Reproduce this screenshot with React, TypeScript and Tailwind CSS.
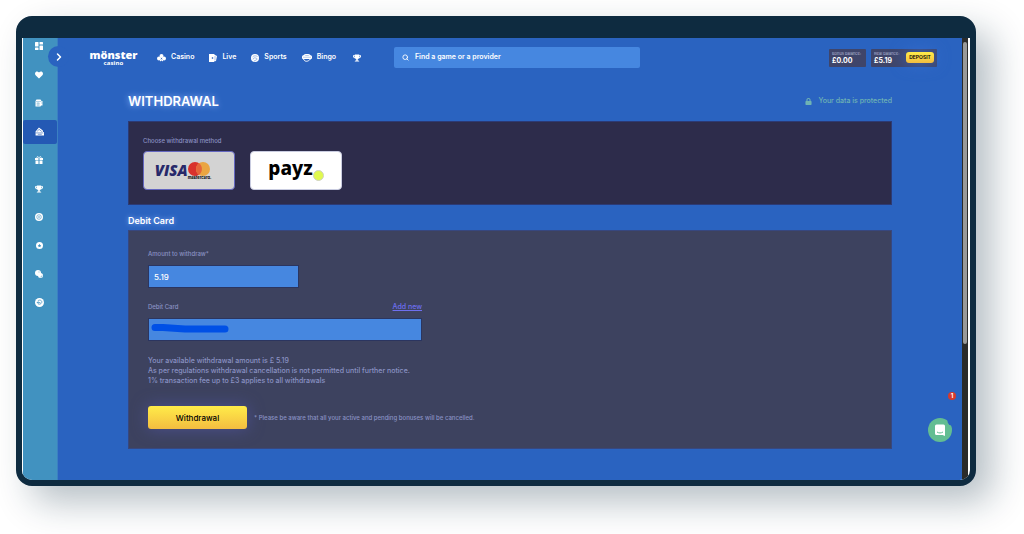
import type { ReactNode } from 'react';
import { FaHeart, FaTrophy, FaLock } from 'react-icons/fa';
import { ChevronRight, Search } from 'lucide-react';

function DashboardIcon() {
  return (
    <svg viewBox="0 0 16 16" className="size-2" fill="currentColor">
      <rect x="0" y="0" width="7" height="9" rx="1" />
      <rect x="9" y="0" width="7" height="5" rx="1" />
      <rect x="0" y="11" width="7" height="5" rx="1" />
      <rect x="9" y="7" width="7" height="9" rx="1" />
    </svg>
  );
}

function WalletIcon() {
  return (
    <svg viewBox="0 0 16 16" className="size-2">
      <path d="M3 1h8l2 3h2v9h-3l-1 2H1V4z" fill="currentColor" />
      <path d="M2 5h11M3 8.500h7M3 12h7M6 6v8M12 8h3" stroke="#4192c0" strokeWidth="0.8" />
    </svg>
  );
}

function WithdrawIcon() {
  return (
    <svg viewBox="0 0 16 16" className="size-[9px]">
      <path d="M1 8l6-7 7 5v3h2v6H1z" fill="currentColor" />
      <path d="M4 8l3-4 5 4M1 10.500h14M5 13h7" stroke="#2459b4" strokeWidth="1" fill="none" />
    </svg>
  );
}

function GiftIcon() {
  return (
    <svg viewBox="0 0 16 16" className="size-2" fill="currentColor">
      <path d="M0 4h7v4H0zM9 4h7v4H9zM1 9h6v7H1zM9 9h6v7H9z" />
      <path d="M8 4C6-1 3 1 4 4M8 4c2-5 5-3 4 0" stroke="currentColor" strokeWidth="1.500" fill="none" />
    </svg>
  );
}

function ChipIcon() {
  return (
    <svg viewBox="0 0 16 16" className="size-2">
      <circle cx="8" cy="8" r="8" fill="currentColor" />
      <circle cx="8" cy="8" r="4.500" fill="none" stroke="#4192c0" strokeWidth="1.2" />
      <circle cx="8" cy="8" r="1.500" fill="#4192c0" />
    </svg>
  );
}

function StarChipIcon() {
  return (
    <svg viewBox="0 0 16 16" className="size-[7px]">
      <circle cx="8" cy="8" r="8" fill="currentColor" />
      <path d="M8 4l1.300 2.700 2.700.4-2 2 .5 2.900L8 10.700 5.500 12l.5-2.900-2-2 2.700-.4z" fill="#4192c0" />
    </svg>
  );
}

function CoinsIcon() {
  return (
    <svg viewBox="0 0 16 16" className="size-2">
      <circle cx="11" cy="11" r="5" fill="currentColor" />
      <circle cx="6" cy="6" r="6" fill="currentColor" />
      <path d="M8 3v2M11 14c2 0 3-1 3-3" stroke="#4192c0" strokeWidth="1.2" fill="none" />
    </svg>
  );
}

function HistoryIcon() {
  return (
    <svg viewBox="0 0 16 16" className="size-[9px]">
      <circle cx="8" cy="8" r="8" fill="currentColor" />
      <path d="M5 5c4-3 8 0 7 3s-5 4-7 2M3.500 8h6M6 6L4 8l2 2" stroke="#4192c0" strokeWidth="1.3" fill="none" />
    </svg>
  );
}

function ClubIcon() {
  return (
    <svg viewBox="0 0 18 16" className="h-2 w-[9px]" fill="currentColor">
      <circle cx="9" cy="4" r="4" />
      <circle cx="4" cy="9" r="4" />
      <circle cx="14" cy="9" r="4" />
      <path d="M6 15v-3l3-2 3 2v3l-3-2z" />
    </svg>
  );
}

function CardsIcon() {
  return (
    <svg viewBox="0 0 16 16" className="size-2">
      <path d="M0 0h10l2 2 4 2-2 10-4 1v1H0z" fill="currentColor" />
      <path d="M7 6l2 2-2 2-2-2z" fill="#2a63c0" />
      <path d="M12 4v9" stroke="#2a63c0" strokeWidth="0.8" />
    </svg>
  );
}

function BallIcon() {
  return (
    <svg viewBox="0 0 16 16" className="size-2">
      <circle cx="8" cy="8" r="8" fill="currentColor" />
      <path d="M3 6c3-4 8-2 10-1M4 11c0-4 4-4 8-2M6 14c2-1 5-2 7-4" stroke="#2a63c0" strokeWidth="0.9" fill="none" />
    </svg>
  );
}

function BingoIcon() {
  return (
    <svg viewBox="0 0 20 16" className="h-2 w-[10px]">
      <path d="M3 4c3-4 11-4 14 0" stroke="currentColor" strokeWidth="2.500" fill="none" />
      <rect x="0" y="3" width="20" height="7" rx="2" fill="currentColor" />
      <path d="M4 5.500v2M8 5.500v2M12 5.500v2M16 5.500v2" stroke="#2a63c0" strokeWidth="1.3" />
      <path d="M3 10c2 6 9 6 14 0" stroke="currentColor" strokeWidth="2" fill="none" />
    </svg>
  );
}

const sideItems: { label: string; icon: ReactNode; active?: boolean }[] = [
  { label: 'Dashboard', icon: <DashboardIcon /> },
  { label: 'Favourites', icon: <FaHeart className="size-2" /> },
  { label: 'Deposit', icon: <WalletIcon /> },
  { label: 'Withdrawal', icon: <WithdrawIcon />, active: true },
  { label: 'Bonuses', icon: <GiftIcon /> },
  { label: 'Tournaments', icon: <FaTrophy className="size-2" /> },
  { label: 'Games', icon: <ChipIcon /> },
  { label: 'Rewards', icon: <StarChipIcon /> },
  { label: 'Transactions', icon: <CoinsIcon /> },
  { label: 'History', icon: <HistoryIcon /> },
];

const navItems = [
  { label: 'Casino', icon: <ClubIcon /> },
  { label: 'Live', icon: <CardsIcon /> },
  { label: 'Sports', icon: <BallIcon /> },
  { label: 'Bingo', icon: <BingoIcon /> },
];

function Sidebar() {
  return (
    <aside className="relative z-10 w-9 shrink-0 border-r border-l border-r-[#3b80c2] border-l-white bg-[#4192c0]">
      <nav className="-mt-1 flex h-[281px] flex-col justify-between">
        {sideItems.map((item) => (
          <a
            key={item.label}
            href="#"
            aria-label={item.label}
            className={`flex h-6 items-center justify-center rounded-xs pr-0.5 text-white ${item.active ? 'bg-[#2459b4]' : ''}`}
          >
            {item.icon}
          </a>
        ))}
      </nav>
      <button
        type="button"
        aria-label="Expand menu"
        className="absolute top-2 -right-3 flex size-[21px] items-center justify-center rounded-full bg-[#2a63c0] text-white"
      >
        <ChevronRight className="size-3" strokeWidth={3} />
      </button>
    </aside>
  );
}

function Logo() {
  return (
    <a href="#" aria-label="Monster Casino" className="flex w-[47px] flex-col items-center font-['Noto_Sans',sans-serif] text-white">
      <span className="text-[11px] leading-[10px] font-black">mönster</span>
      <span className="text-[6px] leading-[6px] font-bold tracking-wide">casino</span>
    </a>
  );
}

function Header() {
  return (
    <header className="flex h-[39px] items-center pr-[25px] pl-8">
      <Logo />
      <nav className="ml-5 flex w-[205px] items-center gap-[15px] text-white">
        {navItems.map((item) => (
          <a key={item.label} href="#" className="flex items-center gap-[5px] text-[7px] font-semibold">
            {item.icon}
            {item.label}
          </a>
        ))}
        <a href="#" aria-label="Tournaments" className="ml-0.5">
          <FaTrophy className="size-2" />
        </a>
      </nav>
      <label className="ml-8 flex h-[21px] w-[246px] items-center gap-1.5 rounded-xs bg-[#4687e0] px-2 text-white">
        <Search className="size-[7px]" strokeWidth={3} />
        <input
          type="search"
          aria-label="Find a game or a provider"
          placeholder="Find a game or a provider"
          className="min-w-0 flex-1 bg-transparent text-[7px] font-semibold outline-none placeholder:text-white"
        />
      </label>
      <div className="ml-auto flex gap-[5px] text-white">
        <div className="flex h-[18px] w-[37px] flex-col justify-center rounded-[1px] bg-[#3f456a] pl-[3px]">
          <span className="text-[4px] leading-[5px] whitespace-nowrap text-[#b3b8d6]">Bonus balance:</span>
          <span className="text-[7px] leading-[9px] font-bold">£0.00</span>
        </div>
        <div className="flex h-[18px] w-[66px] items-center justify-between rounded-[1px] bg-[#3f456a] pr-[3px] pl-[3px]">
          <div className="flex flex-col">
            <span className="text-[4px] leading-[5px] whitespace-nowrap text-[#b3b8d6]">Real balance:</span>
            <span className="text-[7px] leading-[9px] font-bold">£5.19</span>
          </div>
          <button
            type="button"
            className="h-[11px] w-7 rounded-[3px] bg-linear-to-b from-[#ffec49] to-[#f3bd40] text-[5px] leading-[11px] font-semibold text-black shadow-[0_0_16px_#3a6fd0]"
          >
            DEPOSIT
          </button>
        </div>
      </div>
    </header>
  );
}

function VisaMastercard() {
  return (
    <span className="flex items-center pr-3">
      <span className="font-['Open_Sans',sans-serif] text-[15px] leading-none font-extrabold text-[#27296a] italic">VISA</span>
      <span className="flex flex-col items-center pt-px">
        <svg viewBox="0 0 22 14" className="h-[14px] w-[22px]">
          <circle cx="7" cy="7" r="7" fill="#d9322b" />
          <circle cx="15" cy="7" r="7" fill="#eaa541" />
          <path d="M11 1.300a7 7 0 0 1 0 11.400a7 7 0 0 1 0-11.400" fill="#e5653a" />
        </svg>
        <span className="text-[4px] leading-[4px] font-bold text-black">mastercard.</span>
      </span>
    </span>
  );
}

function Payz() {
  return (
    <span className="flex items-end pb-1.5">
      <span className="font-['Noto_Sans',sans-serif] text-[19px] leading-[22px] font-extrabold text-black">payz</span>
      <span className="-mb-0.5 size-[11px] rounded-full border border-[#cfd2c0] bg-[#e0f94f]" />
    </span>
  );
}

function MethodPanel() {
  return (
    <section className="mt-[11px] border border-[#2c3a75] bg-[#2d2c4b] px-3.5 pt-3.5 pb-3.5">
      <p className="text-[6px] leading-[10px] font-medium text-[#8b92c4]">Choose withdrawal method</p>
      <div className="mt-[5px] flex gap-[15px]">
        <button
          type="button"
          aria-label="Visa or Mastercard"
          className="flex h-[39px] w-[92px] items-center justify-center rounded-sm border border-[#6467c0] bg-[#d3d3d3]"
        >
          <VisaMastercard />
        </button>
        <button
          type="button"
          aria-label="Payz"
          className="flex h-[39px] w-[92px] items-center justify-center rounded-sm border border-[#c9cce0] bg-white"
        >
          <Payz />
        </button>
      </div>
    </section>
  );
}

function WithdrawForm() {
  return (
    <form className="border border-[#37477f] bg-[#3d425f] px-[19px] pt-[18px] pb-[19px] font-medium text-[#8b92c4]">
      <label htmlFor="amount" className="block text-[6px] leading-[10px]">
        Amount to withdraw*
      </label>
      <input
        id="amount"
        type="text"
        defaultValue="5.19"
        className="mt-1.5 block h-[23px] w-[151px] border border-[#2b3560] bg-[#4687e0] px-[5px] text-[8px] text-white outline-none"
      />

      <div className="mt-3.5 flex w-[274px] items-center justify-between leading-[10px]">
        <label htmlFor="card" className="text-[6px]">
          Debit Card
        </label>
        <a href="#" className="text-[7px] text-[#6e6ff0] underline">
          Add new
        </a>
      </div>
      <div className="relative mt-1.5 w-[274px]">
        <input
          id="card"
          type="text"
          className="block h-[23px] w-full border border-[#2b3560] bg-[#4687e0] px-[5px] text-[8px] text-white outline-none"
        />
        <svg viewBox="0 0 78 10" className="pointer-events-none absolute top-[5px] left-[3px] h-[10px] w-[78px]">
          <path d="M4 4.500h8l22 1.500h40" stroke="#0050e6" strokeWidth="7" strokeLinecap="round" strokeLinejoin="round" fill="none" />
        </svg>
      </div>

      <div className="mt-[15px] text-[7px] leading-[10px]">
        <p>Your available withdrawal amount is £ 5.19</p>
        <p>As per regulations withdrawal cancellation is not permitted until further notice.</p>
        <p>1% transaction fee up to £3 applies to all withdrawals</p>
      </div>

      <div className="mt-5 flex items-center gap-[7px]">
        <button
          type="button"
          className="h-[23px] w-[99px] rounded-[3px] bg-linear-to-b from-[#ffec49] to-[#f3bd40] text-[8px] text-black shadow-[0_0_16px_#4c5090]"
        >
          Withdrawal
        </button>
        <p className="text-[6px]">* Please be aware that all your active and pending bonuses will be cancelled.</p>
      </div>
    </form>
  );
}

function ChatButton() {
  return (
    <>
      <span className="absolute right-1.5 bottom-20 flex size-2 items-center justify-center rounded-full bg-[#d63a2c] text-[6px] leading-none font-bold text-white">
        1
      </span>
      <button type="button" aria-label="Open chat" className="absolute right-[10px] bottom-[38px] size-6">
        <svg viewBox="0 0 24 24">
          <circle cx="12" cy="12" r="12" fill="#62bd92" />
          <circle cx="24" cy="3" r="4.500" fill="#2a63c0" />
          <path d="M8.500 6.500h7a1.500 1.500 0 0 1 1.500 1.500v10l-2.500-1h-6A1.500 1.500 0 0 1 7 15.500V8a1.500 1.500 0 0 1 1.500-1.500z" fill="#fff" />
          <path d="M9 14c2 1.300 4 1.300 6 0" stroke="#62bd92" fill="none" />
        </svg>
      </button>
    </>
  );
}

export default function App() {
  return (
    <div className="overflow-hidden bg-white pt-4 pr-12 pb-12 pl-4 font-['Inter',sans-serif]">
      <div className="rounded-2xl border-6 border-t-22 border-[#0e2b40] bg-[#0e2b40] shadow-[16px_16px_36px_rgba(14,43,64,0.3)]">
        <div className="flex overflow-hidden rounded-b-[10px] bg-white">
          <Sidebar />

          <div className="relative min-w-0 flex-1 bg-[#2a63c0]">
            <Header />
            <main className="px-[70px] pt-[15px] pb-[31px]">
              <div className="flex items-center justify-between">
                <h1 className="text-[13px] leading-[18px] font-semibold text-white [text-shadow:0_0_6px_#8fb4ff]">WITHDRAWAL</h1>
                <p className="flex items-center gap-1.5 text-[7px] font-medium text-[#6fb3b4]">
                  <FaLock className="size-[7px]" />
                  Your data is protected
                </p>
              </div>
              <MethodPanel />
              <h2 className="mt-[9px] mb-[2px] text-[9px] leading-[14px] font-semibold text-white [text-shadow:0_0_5px_#8fb4ff]">Debit Card</h2>
              <WithdrawForm />
            </main>
            <ChatButton />
          </div>

          {/* Scroll track */}
          <div className="mr-0.5 flex w-1.5 shrink-0 flex-col bg-[#2b2b2b] px-px pt-1">
            <div className="h-[302px] rounded-xs bg-[#9a9a9a]" />
          </div>
        </div>
      </div>
    </div>
  );
}
